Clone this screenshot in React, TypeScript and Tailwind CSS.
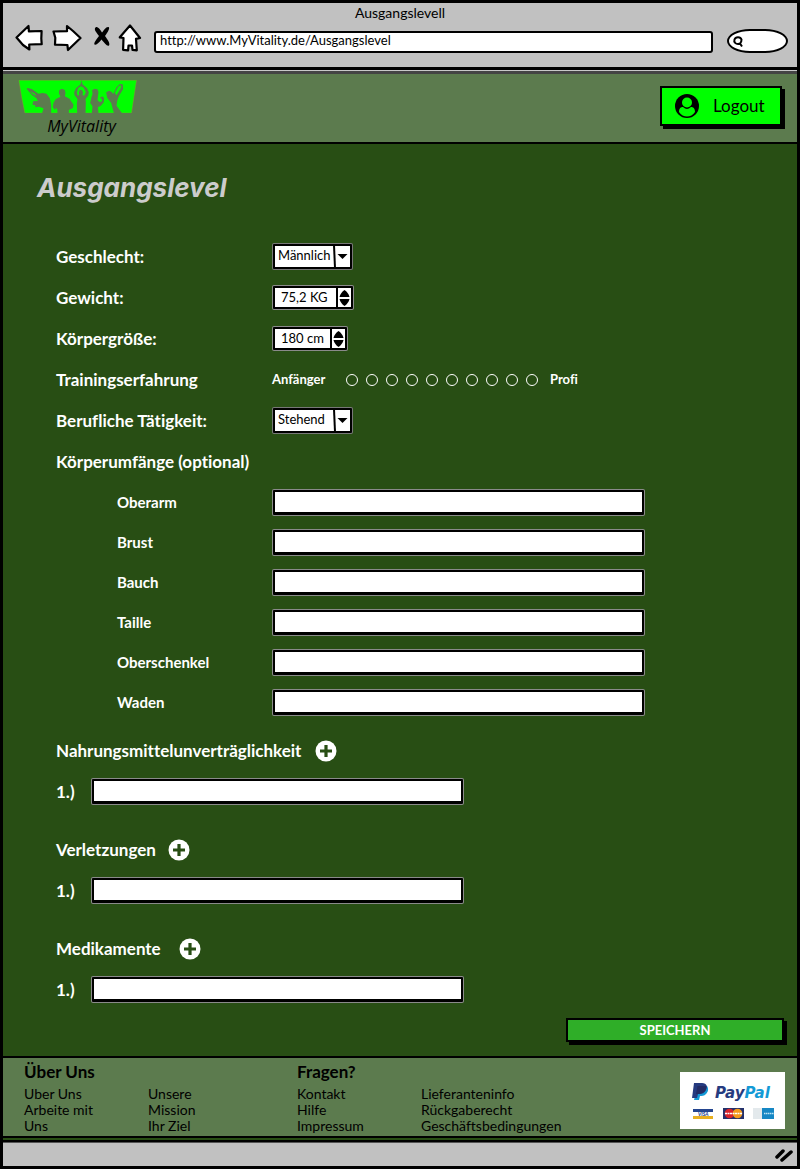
import React from "react";

const measurements = ["Oberarm", "Brust", "Bauch", "Taille", "Oberschenkel", "Waden"];
const levels = [1, 2, 3, 4, 5, 6, 7, 8, 9, 10];

const footerGroups = [
  {
    title: "Über Uns",
    columns: [
      ["Uber Uns", "Arbeite mit", "Uns"],
      ["Unsere", "Mission", "Ihr Ziel"],
    ],
  },
  {
    title: "Fragen?",
    columns: [
      ["Kontakt", "Hilfe", "Impressum"],
      ["Lieferanteninfo", "Rückgaberecht", "Geschäftsbedingungen"],
    ],
  },
];

const fieldClass =
  "block h-[25px] w-full max-w-[371px] rounded-[1px] border-2 border-b-[3px] border-black bg-white px-2 text-sm text-black shadow-[0_0_0_1px_#8a8a8a]";

function BrowserBar() {
  return (
    <div className="flex h-16 flex-col bg-[#c1c1c1]">
      <p className="h-[19px] text-center text-sm leading-5">Ausgangslevell</p>
      <div className="flex items-center pr-[9px] pl-3">
        <button type="button" aria-label="Zurück">
          <svg width="29" height="28" viewBox="0 0 29 28" fill="#fff" stroke="#000" strokeWidth="2.200" strokeLinejoin="round">
            <path d="M1.500 13.500 13.500 2l.4 5.300L26.600 7l-.3 7.500.4 5.700-12.500.3.200 5L8 21z" />
          </svg>
        </button>
        <button type="button" aria-label="Vorwärts" className="ml-2">
          <svg width="30" height="28" viewBox="0 0 30 28" fill="#fff" stroke="#000" strokeWidth="2.200" strokeLinejoin="round">
            <path d="M1.500 7.500 15 7.200V2l6 5 7.500 7L16 26l-.6-5L3 20.700l.3-7z" />
          </svg>
        </button>
        <button type="button" aria-label="Abbrechen" className="ml-[11px]">
          <svg width="18" height="28" viewBox="0 0 18 28" fill="#000">
            <path d="M2.500 3.500c2-1.500 4 1.500 6.500 5 2-2.500 4-6 6.500-5.500 2 1-1 5.500-3.500 9 2.500 3.500 5.500 7.500 4 9.500-2 1-4.500-2.500-7.500-6-2.500 3-5 6-7 5C.5 19 3.500 15.500 6 12 3.500 8.500.5 5.500 2.500 3.500z" />
          </svg>
        </button>
        <button type="button" aria-label="Startseite" className="ml-[7px]">
          <svg width="24" height="28" viewBox="0 0 24 28" fill="#fff" stroke="#000" strokeWidth="2.200" strokeLinejoin="round">
            <path d="M12 1.500 22 14l-4 .8.800 11.500-4.300-.5-.5-4.300h-3.500l-.4 4.800-5-.5.400-11.800-3.700-.7z" />
          </svg>
        </button>
        <input
          aria-label="Adresse"
          defaultValue="http://www.MyVitality.de/Ausgangslevel"
          className="mt-2 ml-3 h-[22px] min-w-0 flex-1 rounded-[3px] border-2 border-black bg-white pb-[3px] pl-1 text-[13px] text-black"
        />
        <label className="mt-[7px] ml-[14px] flex h-6 w-[61px] items-center rounded-[45%/60%] border-2 border-black bg-white pl-[3px]">
          <svg width="12" height="16" viewBox="0 0 12 16" fill="none" stroke="#000" strokeWidth="2" className="shrink-0">
            <path d="M9.500 6.500C8.500 3.500 3.500 3.500 2.500 6.500S4 11 6 11s3.500-2 3.500-4.500zM8 10.500l2 3" />
          </svg>
          <input aria-label="Suche" className="w-full min-w-0 bg-transparent text-xs outline-none" />
        </label>
      </div>
    </div>
  );
}

function Logo() {
  return (
    <a href="#start" className="flex w-[119px] flex-col items-center text-black">
      <svg width="119" height="33" viewBox="12 12 356 99" aria-hidden="true">
        <path d="M14 13H367L352 111H32L24 72z" fill="#0f0" stroke="#b08a3c" strokeWidth="1" />
        <g fill="#5c7b4e">
          <path
            d="M37 38l4-2 12 3 20 14 12-2 12 2 10 14 4 20v24H84l4-14-14-5-10 2-1-6-8-2 2-10 14-1-4-8-14-10-12-14zM47 46l10 9 9 5-4-7z"
            fillRule="evenodd"
          />
          <path d="M134 52l1-9 8-5 9 4 2 10-2 9 14 7 12 18-2 10-12 6v9h-34l-1-12-4-3-2 6-7-8 2-14 7-11 14-7z" />
          <path d="M202 13l3 12 14 12 5 12-2 10-8 10 1 10-1 32h-25l-1-28 2-14-9-11-1-9 5-12 14-12z" />
          <path d="M234 42l8-4 8 2 3 8-2 16-1 8 6 6 8-2-1-7-6-4 8-4 5 6-1 12-9 10-9 5 2 17h-20l2-20-7-10 4-18 3-8z" />
          <path d="M276 49l9-5 8 4 4 6 10-20 10-10 9 1 1 14-13 22-5 14-2 14 16 22h-24l-8-30-12-16z" />
        </g>
        <path d="M188 50l4-14 8-5 9 4 6 14-5 10-5-2 2-8-4-7h-6l-3 7 1 8-4 2z" fill="#0f0" />
        <path d="M302 50l10-18 6-4 3 2-2 8-12 20z" fill="#0f0" />
      </svg>
      <span className="pl-2 font-['Open_Sans',sans-serif] text-base leading-[26px] italic">MyVitality</span>
    </a>
  );
}

function Row({ label, htmlFor, children }: { label: string; htmlFor?: string; children?: React.ReactNode }) {
  return (
    <div className="flex h-[41px] items-center">
      <label htmlFor={htmlFor} className="w-[217px] shrink-0 whitespace-nowrap">
        {label}
      </label>
      {children}
    </div>
  );
}

function Dropdown({ id, options }: { id: string; options: string[] }) {
  return (
    <div className="relative flex">
      <select
        id={id}
        className="h-[25px] w-[79px] appearance-none rounded-[1px] border-2 border-black bg-white pb-[2px] pl-[3px] text-[13px] font-normal text-black shadow-[0_0_0_1px_#777]"
      >
        {options.map((o) => (
          <option key={o}>{o}</option>
        ))}
      </select>
      <svg className="pointer-events-none absolute top-0 right-0" width="20" height="25" viewBox="0 0 20 25" aria-hidden="true">
        <path d="M2 1l1 23" stroke="#000" strokeWidth="2" />
        <path d="M5.500 10h10L10.500 15z" />
      </svg>
    </div>
  );
}

function Stepper({ id, value, wide }: { id: string; value: string; wide?: boolean }) {
  return (
    <div className="flex h-[23px] rounded-[1px] border-2 border-black bg-white shadow-[0_0_0_1px_#8a8a8a]">
      <input
        id={id}
        defaultValue={value}
        className={`${wide ? "w-[61px]" : "w-[55px]"} bg-white pl-[6px] text-[13px] font-normal text-black`}
      />
      <div className="flex flex-col justify-center border-l-2 border-black px-[1px]">
        <button type="button" aria-label="Erhöhen">
          <svg width="11" height="8" viewBox="0 0 11 8">
            <path d="M5.500 0C7 1 10 4 10.500 7H.5C1 4 4 1 5.500 0z" />
          </svg>
        </button>
        <button type="button" aria-label="Verringern">
          <svg width="11" height="8" viewBox="0 0 11 8">
            <path d="M5.500 8C7 7 10 4 10.500 1H.5C1 4 4 7 5.500 8z" />
          </svg>
        </button>
      </div>
    </div>
  );
}

function ListSection({ id, title, gap }: { id: string; title: string; gap: string }) {
  return (
    <section>
      <div className={`flex h-[41px] items-center ${gap}`}>
        <h2>{title}</h2>
        <button type="button" aria-label={`${title} hinzufügen`}>
          <svg width="22" height="22" viewBox="0 0 22 22">
            <circle cx="11" cy="11" r="10.500" fill="#fff" />
            <path d="M11 5v12M5 11h12" stroke="#284e14" strokeWidth="3.200" />
          </svg>
        </button>
      </div>
      <div className="flex h-[41px] items-center">
        <label htmlFor={id} className="w-9 shrink-0">
          1.)
        </label>
        <input id={id} className={fieldClass} />
      </div>
    </section>
  );
}

function PayPalBadge() {
  return (
    <svg width="105" height="57" viewBox="0 0 105 57" role="img" aria-label="PayPal" className="shrink-0">
      <path d="M0 0h105v57H0z" fill="#fff" />
      <path d="M18 14h9c2 3 1 6-1 8-2 2-4 2-6 2l-1 4h-5z" fill="#139ad6" />
      <path d="M14 11h8c5 0 6 4 4 7-2 4-5 4-8 4l-1 4h-5z" fill="#263b80" />
      <path d="M17.500 14h8.500c1 4-2 8-8 8h-2z" fill="#232c65" />
      <text x="35" y="26" fontFamily="DejaVu Sans, sans-serif" fontSize="15" fontWeight="700" fontStyle="italic" fill="#263b80">
        Pay<tspan fill="#139ad6">Pal</tspan>
      </text>
      <path d="M13 37h20v10H13z" fill="#fff" />
      <path d="M13 37h20v3H13z" fill="#24458f" />
      <path d="M13 44h20v3H13z" fill="#e8b020" />
      <text x="18" y="44" fontFamily="Lato, sans-serif" fontSize="5" fontWeight="900" fontStyle="italic" fill="#24458f">VISA</text>
      <path d="M43 36h21v11H43z" fill="#23306b" />
      <circle cx="49.500" cy="41.500" r="4.800" fill="#d8232a" />
      <circle cx="57.500" cy="41.500" r="4.800" fill="#f39a1d" />
      <path d="M45 41.500h17" stroke="#fff" strokeWidth="1.500" strokeDasharray="2 .5" />
      <path d="M73 36h10v11H73z" fill="#e3e9ec" />
      <path d="M82 36h12v11H82z" fill="#1687c4" />
      <path d="M84 41.500h10" stroke="#bde3f5" strokeWidth="1.500" strokeDasharray="1.500 .5" />
    </svg>
  );
}

export default function App() {
  return (
    <div className="flex min-h-screen flex-col border-[3px] border-black bg-[#c1c1c1] font-['Lato',sans-serif] text-black [font-variant-ligatures:none]">
      <BrowserBar />
      <header className="flex h-[77px] items-start border-t-[3px] border-b-2 border-black bg-[#5c7b4e]">
        <div className="flex w-full items-start justify-between border-t border-[#c9c9c9] pr-[15px] pl-[15px] shadow-[inset_0_3px_0_#444]">
          <div className="pt-[9px]">
            <Logo />
          </div>
          <button
            type="button"
            className="mt-[15px] flex h-10 w-[122px] items-center gap-[14px] border-2 border-black bg-[#00ff00] pl-[13px] text-[17px] shadow-[3px_3px_0_#000]"
          >
            <svg width="24" height="24" viewBox="0 0 24 24" aria-hidden="true">
              <circle cx="12" cy="12" r="12" />
              <circle cx="12" cy="8.500" r="5" fill="#0f0" />
              <path d="M4 18c0-4 2-5 4-5 3 2.500 5 2.500 8 0 2 0 4 1 4 5-4 6-12 6-16 0z" fill="#0f0" />
            </svg>
            Logout
          </button>
        </div>
      </header>

      <main className="flex-1 bg-[#284e14] pb-[11px] text-white">
        <form onSubmit={(e) => e.preventDefault()}>
          <h1 className="pt-[26px] pl-[34px] font-['Inter',sans-serif] text-[26px] leading-9 font-bold text-[#cccccc] italic">
            Ausgangslevel
          </h1>
          <div className="mt-[30px] px-[53px] text-[17px] font-bold">
            <Row label="Geschlecht:" htmlFor="geschlecht">
              <Dropdown id="geschlecht" options={["Männlich", "Weiblich"]} />
            </Row>
            <Row label="Gewicht:" htmlFor="gewicht">
              <Stepper id="gewicht" value="75,2 KG" wide />
            </Row>
            <Row label="Körpergröße:" htmlFor="groesse">
              <Stepper id="groesse" value="180 cm" />
            </Row>
            <fieldset className="flex h-[41px] items-center">
              <legend className="float-left flex h-[41px] w-[216px] items-center">Trainingserfahrung</legend>
              <span className="w-[74px] text-[13px]">Anfänger</span>
              <div className="flex gap-2">
                {levels.map((n) => (
                  <input
                    key={n}
                    type="radio"
                    name="erfahrung"
                    aria-label={`Stufe ${n}`}
                    className="size-3 appearance-none rounded-full border border-white checked:bg-white"
                  />
                ))}
              </div>
              <span className="pl-3 text-[13px]">Profi</span>
            </fieldset>
            <Row label="Berufliche Tätigkeit:" htmlFor="taetigkeit">
              <Dropdown id="taetigkeit" options={["Stehend", "Sitzend"]} />
            </Row>
            <h2 className="flex h-[41px] items-center">Körperumfänge (optional)</h2>
            {measurements.map((m) => (
              <div key={m} className="flex h-10 items-center">
                <label htmlFor={m} className="w-[217px] shrink-0 pl-[61px] text-[15px]">
                  {m}
                </label>
                <input id={m} className={fieldClass} />
              </div>
            ))}
            <div className="mt-2 flex flex-col gap-[17px]">
              <ListSection id="unvertraeglichkeit" title="Nahrungsmittelunverträglichkeit" gap="gap-[14px]" />
              <ListSection id="verletzungen" title="Verletzungen" gap="gap-3" />
              <ListSection id="medikamente" title="Medikamente" gap="gap-[18px]" />
            </div>
          </div>
          <div className="mt-2 flex justify-end pr-[13px]">
            <button
              type="submit"
              className="mb-[3px] h-6 w-[218px] border-2 border-black bg-[#2fae28] text-[13px] leading-5 font-bold text-white shadow-[3px_3px_0_#000]"
            >
              SPEICHERN
            </button>
          </div>
        </form>
      </main>

      <footer className="flex items-start justify-between border-y-2 border-black bg-[#5c7b4e] pr-3 pl-[21px]">
        <div className="flex">
          {footerGroups.map((g) => (
            <nav key={g.title} aria-label={g.title} className="w-[273px] pt-1 pb-[2px]">
              <h2 className="mb-1 text-[17px] leading-5 font-bold">{g.title}</h2>
              <div className="flex text-sm leading-4">
                {g.columns.map((col) => (
                  <ul key={col[0]} className="w-[124px] whitespace-nowrap">
                    {col.map((item) => (
                      <li key={item}>
                        <a href="#info">{item}</a>
                      </li>
                    ))}
                  </ul>
                ))}
              </div>
            </nav>
          ))}
        </div>
        <div className="pt-[14px]">
          <PayPalBadge />
        </div>
      </footer>
      <div className="h-[2px] bg-[#284e14]" />
      <div className="flex h-[26px] items-end justify-end border-t-2 border-black pr-1 pb-[3px] shadow-[inset_0_1px_0_#555]">
        <svg width="18" height="15" viewBox="0 0 18 15" stroke="#000" strokeWidth="3.500" strokeLinecap="round" aria-hidden="true">
          <path d="M2 9l6-6M7 12l9-8" />
        </svg>
      </div>
    </div>
  );
}
